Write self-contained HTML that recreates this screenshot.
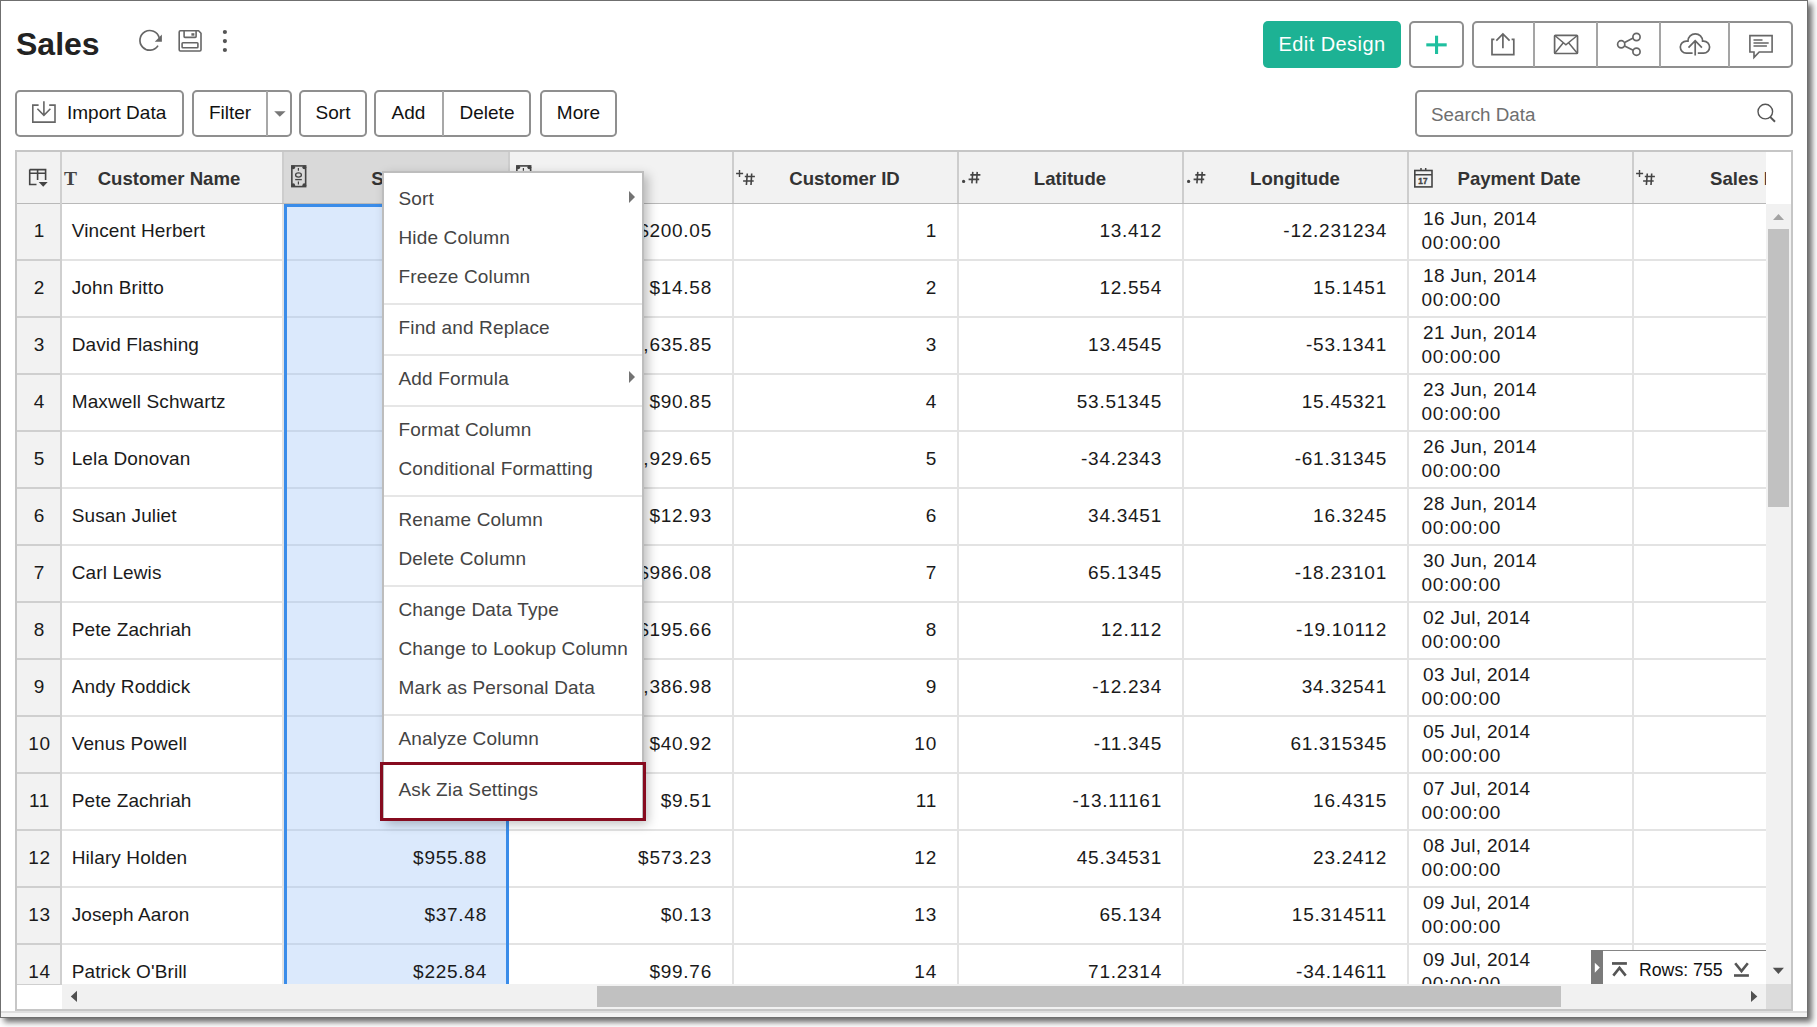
<!DOCTYPE html><html><head><meta charset="utf-8"><title>Sales</title><style>
*{box-sizing:border-box;margin:0;padding:0}
html,body{width:1817px;height:1027px;overflow:hidden;background:#fff;font-family:"Liberation Sans",sans-serif;color:#222}
.a{position:absolute;white-space:nowrap}
#frame{position:absolute;left:0;top:0;width:1808px;height:1018px;box-shadow:4px 4px 6px rgba(0,0,0,.6);background:#fff;overflow:hidden}
#fb{position:absolute;left:0;top:0;width:1808px;height:1018px;border:1px solid #6f6f6f}
.btn{position:absolute;border:2px solid #8f8f8f;border-radius:5px;background:#fff}
.bt{position:absolute;font-size:19px;line-height:19px;color:#111;white-space:nowrap}
.hd{position:absolute;font-size:18.6px;line-height:18.6px;font-weight:bold;color:#333;white-space:nowrap}
.cell{position:absolute;font-size:19px;line-height:19px;color:#1a1a1a;white-space:nowrap;letter-spacing:0.75px}
.nm{letter-spacing:0.12px}
.r{text-align:right}
.mi{position:absolute;left:398.5px;font-size:19px;line-height:19px;color:#444;white-space:nowrap;letter-spacing:0.15px}
.sep{position:absolute;left:384px;width:258px;height:2px;background:#e6e6e6}
</style></head><body>
<div id="frame">
<div class="a" style="left:16px;top:27.9px;font-size:32px;line-height:32px;font-weight:bold;color:#222">Sales</div>
<svg class="a" style="left:0;top:0" width="260" height="70" viewBox="0 0 260 70">
<path d="M158 45.6 A9.8 9.8 0 1 1 159.2 37.8" fill="none" stroke="#666" stroke-width="1.7"/>
<path d="M161.9 34.4 V41.8 H154.8 Z" fill="#666"/>
<path d="M180.6 30.7 H198.6 L201 33.2 V49.8 Q201 51 199.8 51 H180.4 Q179.2 51 179.2 49.8 V31.9 Q179.2 30.7 180.4 30.7 Z" fill="none" stroke="#666" stroke-width="1.6" stroke-linejoin="round"/>
<path d="M184.1 30.8 V36.6 Q184.1 37.4 184.9 37.4 H195.3 Q196.1 37.4 196.1 36.6 V30.8" fill="none" stroke="#666" stroke-width="1.6"/>
<rect x="191.4" y="33.2" width="3" height="2.5" fill="#666"/>
<rect x="182.1" y="42.8" width="15.8" height="5" rx="0.8" fill="none" stroke="#666" stroke-width="1.6"/>
<circle cx="224.9" cy="32" r="2.1" fill="#555"/><circle cx="224.9" cy="41.1" r="2.1" fill="#555"/><circle cx="224.9" cy="50" r="2.1" fill="#555"/>
</svg>
<div class="a" style="left:1263px;top:21px;width:138px;height:47px;background:#1db294;border-radius:5px"></div>
<div class="a" style="left:1263px;top:33.5px;width:138px;text-align:center;font-size:20px;line-height:20px;color:#fff;letter-spacing:0.45px">Edit Design</div>
<div class="btn" style="left:1409px;top:21px;width:55px;height:47px"></div>
<div class="btn" style="left:1472px;top:21px;width:321px;height:47px"></div>
<div class="a" style="left:1533.2px;top:22px;width:1.8px;height:45px;background:#a5a5a5"></div>
<div class="a" style="left:1596.1px;top:22px;width:1.8px;height:45px;background:#a5a5a5"></div>
<div class="a" style="left:1659.0px;top:22px;width:1.8px;height:45px;background:#a5a5a5"></div>
<div class="a" style="left:1728.1px;top:22px;width:1.8px;height:45px;background:#a5a5a5"></div>
<svg class="a" style="left:0;top:0" width="1817" height="70" viewBox="0 0 1817 70">
<rect x="1435" y="35.7" width="3.1" height="18.3" fill="#1fbf9f"/><rect x="1426.3" y="43.3" width="20.4" height="3.1" fill="#1fbf9f"/>
<g fill="none" stroke="#666" stroke-width="1.7">
<path d="M1494.4 39.4 H1492 V54.6 H1513.8 V39.4 H1511.6"/>
<path d="M1502.9 48.2 V34.2 M1496.3 40.6 L1502.9 34 L1509.6 40.6"/>
<rect x="1554.6" y="35.3" width="22.9" height="18.2" rx="0.8"/>
<path d="M1554.8 35.5 L1565.9 44.8 L1577.3 35.5 M1554.8 53.3 L1563.3 42.8 M1577.3 53.3 L1568.6 42.8" stroke-width="1.5"/>
<circle cx="1636.5" cy="37" r="3.6"/><circle cx="1621.2" cy="44.3" r="3.6"/><circle cx="1636.5" cy="51.7" r="3.6"/>
<path d="M1624.6 42.5 L1633.2 38.1 M1624.6 46.1 L1633.2 50.3"/>
<path d="M1692.6 53.1 H1686.3 A6 6 0 0 1 1686.3 41.1 H1688 A7.3 7.3 0 0 1 1702.6 41.1 H1703.6 A6 6 0 0 1 1703.6 53.1 H1697.8"/>
<path d="M1695.2 55.6 V40.8 M1688.5 47.6 L1695.2 40.7 L1701.9 47.6"/>
<path d="M1749.9 35.6 H1772.1 V52 H1759.2 L1754 57.4 V52 H1749.9 Z" stroke-width="1.6" stroke-linejoin="miter"/>
<path d="M1753.5 40 H1762.5 M1753.5 43 H1768.7 M1753.5 46 H1766.9" stroke-width="1.5"/>
</g></svg>
<div class="btn" style="left:15px;top:90px;width:169px;height:47px"></div>
<svg class="a" style="left:25px;top:95px" width="40" height="35" viewBox="0 0 40 35"><path d="M13.6 10.1 H7.8 V27.1 H30 V10.1 H24.2" fill="none" stroke="#666" stroke-width="1.6"/><path d="M18.9 6.3 V20 M12.4 13.8 L18.9 20.3 L25.4 13.8" fill="none" stroke="#666" stroke-width="1.6"/></svg>
<div class="bt" style="left:67px;top:102.6px">Import Data</div>
<div class="btn" style="left:192px;top:90px;width:100px;height:47px"></div>
<div class="a" style="left:266px;top:91px;width:1.7px;height:45px;background:#a8a8a8"></div>
<div class="bt" style="left:192px;width:76px;text-align:center;top:102.6px">Filter</div>
<svg class="a" style="left:270px;top:108px" width="20" height="12" viewBox="0 0 20 12"><path d="M4.2 3.3 H15.6 L9.8 8.8 Z" fill="#777"/></svg>
<div class="btn" style="left:299px;top:90px;width:68px;height:47px"></div>
<div class="bt" style="left:299px;width:68px;text-align:center;top:102.6px">Sort</div>
<div class="btn" style="left:374px;top:90px;width:157px;height:47px"></div>
<div class="a" style="left:442px;top:91px;width:1.7px;height:45px;background:#a8a8a8"></div>
<div class="bt" style="left:374px;width:69px;text-align:center;top:102.6px">Add</div>
<div class="bt" style="left:443px;width:88px;text-align:center;top:102.6px">Delete</div>
<div class="btn" style="left:540px;top:90px;width:77px;height:47px"></div>
<div class="bt" style="left:540px;width:77px;text-align:center;top:102.6px">More</div>
<div class="btn" style="left:1415px;top:90px;width:378px;height:47px"></div>
<div class="a" style="left:1431px;top:106.0px;font-size:18.8px;line-height:18.8px;color:#6f6f6f">Search Data</div>
<svg class="a" style="left:1755px;top:102px" width="24" height="24" viewBox="0 0 24 24"><circle cx="10.3" cy="9.6" r="7.3" fill="none" stroke="#555" stroke-width="1.4"/><path d="M15.1 14.9 L20 19.7" stroke="#555" stroke-width="2"/></svg>
<div class="a" style="left:15px;top:150px;width:1778px;height:861px;border:2px solid #c6c6c6;background:#fff"></div>
<div class="a" style="left:17px;top:152px;width:1749px;height:51px;background:#f2f2f2"></div>
<div class="a" style="left:284px;top:152px;width:224px;height:51px;background:#d9d9d9"></div>
<div class="a" style="left:17px;top:203px;width:1749px;height:1px;background:#b9b9b9"></div>
<div class="a" style="left:17px;top:204px;width:43px;height:781px;background:#f2f2f2"></div>
<div class="a" style="left:284px;top:204px;width:225px;height:780px;background:#dbe9fc"></div>
<div class="a" style="left:17px;top:259px;width:44px;height:2px;background:#cfcfcf"></div>
<div class="a" style="left:62px;top:259px;width:1704px;height:2px;background:#e3e3e3"></div>
<div class="a" style="left:287px;top:259px;width:219px;height:2px;background:#c9d7ea"></div>
<div class="a" style="left:17px;top:316px;width:44px;height:2px;background:#cfcfcf"></div>
<div class="a" style="left:62px;top:316px;width:1704px;height:2px;background:#e3e3e3"></div>
<div class="a" style="left:287px;top:316px;width:219px;height:2px;background:#c9d7ea"></div>
<div class="a" style="left:17px;top:373px;width:44px;height:2px;background:#cfcfcf"></div>
<div class="a" style="left:62px;top:373px;width:1704px;height:2px;background:#e3e3e3"></div>
<div class="a" style="left:287px;top:373px;width:219px;height:2px;background:#c9d7ea"></div>
<div class="a" style="left:17px;top:430px;width:44px;height:2px;background:#cfcfcf"></div>
<div class="a" style="left:62px;top:430px;width:1704px;height:2px;background:#e3e3e3"></div>
<div class="a" style="left:287px;top:430px;width:219px;height:2px;background:#c9d7ea"></div>
<div class="a" style="left:17px;top:487px;width:44px;height:2px;background:#cfcfcf"></div>
<div class="a" style="left:62px;top:487px;width:1704px;height:2px;background:#e3e3e3"></div>
<div class="a" style="left:287px;top:487px;width:219px;height:2px;background:#c9d7ea"></div>
<div class="a" style="left:17px;top:544px;width:44px;height:2px;background:#cfcfcf"></div>
<div class="a" style="left:62px;top:544px;width:1704px;height:2px;background:#e3e3e3"></div>
<div class="a" style="left:287px;top:544px;width:219px;height:2px;background:#c9d7ea"></div>
<div class="a" style="left:17px;top:601px;width:44px;height:2px;background:#cfcfcf"></div>
<div class="a" style="left:62px;top:601px;width:1704px;height:2px;background:#e3e3e3"></div>
<div class="a" style="left:287px;top:601px;width:219px;height:2px;background:#c9d7ea"></div>
<div class="a" style="left:17px;top:658px;width:44px;height:2px;background:#cfcfcf"></div>
<div class="a" style="left:62px;top:658px;width:1704px;height:2px;background:#e3e3e3"></div>
<div class="a" style="left:287px;top:658px;width:219px;height:2px;background:#c9d7ea"></div>
<div class="a" style="left:17px;top:715px;width:44px;height:2px;background:#cfcfcf"></div>
<div class="a" style="left:62px;top:715px;width:1704px;height:2px;background:#e3e3e3"></div>
<div class="a" style="left:287px;top:715px;width:219px;height:2px;background:#c9d7ea"></div>
<div class="a" style="left:17px;top:772px;width:44px;height:2px;background:#cfcfcf"></div>
<div class="a" style="left:62px;top:772px;width:1704px;height:2px;background:#e3e3e3"></div>
<div class="a" style="left:287px;top:772px;width:219px;height:2px;background:#c9d7ea"></div>
<div class="a" style="left:17px;top:829px;width:44px;height:2px;background:#cfcfcf"></div>
<div class="a" style="left:62px;top:829px;width:1704px;height:2px;background:#e3e3e3"></div>
<div class="a" style="left:287px;top:829px;width:219px;height:2px;background:#c9d7ea"></div>
<div class="a" style="left:17px;top:886px;width:44px;height:2px;background:#cfcfcf"></div>
<div class="a" style="left:62px;top:886px;width:1704px;height:2px;background:#e3e3e3"></div>
<div class="a" style="left:287px;top:886px;width:219px;height:2px;background:#c9d7ea"></div>
<div class="a" style="left:17px;top:943px;width:44px;height:2px;background:#cfcfcf"></div>
<div class="a" style="left:62px;top:943px;width:1704px;height:2px;background:#e3e3e3"></div>
<div class="a" style="left:287px;top:943px;width:219px;height:2px;background:#c9d7ea"></div>
<div class="a" style="left:17px;top:984px;width:44px;height:2px;background:#cfcfcf"></div>
<div class="a" style="left:60px;top:152px;width:2px;height:833px;background:#cfcfcf"></div>
<div class="a" style="left:282px;top:152px;width:2px;height:51px;background:#cdcdcd"></div>
<div class="a" style="left:282px;top:204px;width:2px;height:780px;background:#e3e3e3"></div>
<div class="a" style="left:508px;top:152px;width:2px;height:51px;background:#cdcdcd"></div>
<div class="a" style="left:732px;top:152px;width:2px;height:51px;background:#cdcdcd"></div>
<div class="a" style="left:732px;top:204px;width:2px;height:780px;background:#e3e3e3"></div>
<div class="a" style="left:957px;top:152px;width:2px;height:51px;background:#cdcdcd"></div>
<div class="a" style="left:957px;top:204px;width:2px;height:780px;background:#e3e3e3"></div>
<div class="a" style="left:1182px;top:152px;width:2px;height:51px;background:#cdcdcd"></div>
<div class="a" style="left:1182px;top:204px;width:2px;height:780px;background:#e3e3e3"></div>
<div class="a" style="left:1407px;top:152px;width:2px;height:51px;background:#cdcdcd"></div>
<div class="a" style="left:1407px;top:204px;width:2px;height:780px;background:#e3e3e3"></div>
<div class="a" style="left:1632px;top:152px;width:2px;height:51px;background:#cdcdcd"></div>
<div class="a" style="left:1632px;top:204px;width:2px;height:780px;background:#e3e3e3"></div>
<div class="a" style="left:284px;top:204px;width:225px;height:781px;border:3px solid #3a8ce9;border-bottom:none"></div>
<div class="hd" style="left:-31.0px;width:400px;text-align:center;top:169.9px">Customer Name</div>
<div class="hd" style="left:195.5px;width:400px;text-align:center;top:169.9px">Sales</div>
<div class="hd" style="left:644.5px;width:400px;text-align:center;top:169.9px">Customer ID</div>
<div class="hd" style="left:870.0px;width:400px;text-align:center;top:169.9px">Latitude</div>
<div class="hd" style="left:1095.0px;width:400px;text-align:center;top:169.9px">Longitude</div>
<div class="hd" style="left:1319.0px;width:400px;text-align:center;top:169.9px">Payment Date</div>
<div class="hd" style="left:1710px;top:169.9px">Sales ID</div>
<div class="a" style="left:64px;top:168.7px;font-family:'Liberation Serif',serif;font-weight:bold;font-size:19.5px;line-height:19.5px;color:#444">T</div>
<svg class="a" style="left:291px;top:165px" width="16" height="23" viewBox="0 0 16 23"><rect x="0.85" y="0.9" width="13.8" height="20.7" fill="none" stroke="#444" stroke-width="1.6"/><circle cx="2.2" cy="2.3" r="1.9" fill="#444"/><circle cx="13.3" cy="2.3" r="1.9" fill="#444"/><circle cx="2.2" cy="20.2" r="1.9" fill="#444"/><circle cx="13.3" cy="20.2" r="1.9" fill="#444"/><ellipse cx="7.5" cy="10" rx="2.9" ry="2.1" fill="none" stroke="#444" stroke-width="1.3"/><path d="M7.4 3 V5.8 M7.4 16.5 V19.5" stroke="#444" stroke-width="1.2"/><path d="M4.2 14.6 H10.8" stroke="#444" stroke-width="1.3"/></svg>
<svg class="a" style="left:516px;top:165px" width="16" height="23" viewBox="0 0 16 23"><rect x="0.85" y="0.9" width="13.8" height="20.7" fill="none" stroke="#444" stroke-width="1.6"/><circle cx="2.2" cy="2.3" r="1.9" fill="#444"/><circle cx="13.3" cy="2.3" r="1.9" fill="#444"/><circle cx="2.2" cy="20.2" r="1.9" fill="#444"/><circle cx="13.3" cy="20.2" r="1.9" fill="#444"/><ellipse cx="7.5" cy="10" rx="2.9" ry="2.1" fill="none" stroke="#444" stroke-width="1.3"/><path d="M7.4 3 V5.8 M7.4 16.5 V19.5" stroke="#444" stroke-width="1.2"/><path d="M4.2 14.6 H10.8" stroke="#444" stroke-width="1.3"/></svg>
<svg class="a" style="left:0;top:0" width="1817" height="200" viewBox="0 0 1817 200"><g fill="none" stroke="#444" stroke-width="1.6"><path d="M29.7 169.4 V184.5 H36.5 M29.7 169.6 H45.6 V180 M37.6 169.4 V180 M29.7 173.2 H45.6"/><path d="M739.5 170 V177 M736.1 173.55 H743.1" stroke-width="1.4"/><path d="M747.3 173.5 L746.4 185.0 M751.7 173.5 L751.0 185.0 M744.8 176.5 H754.9 M743.1 181.0 H753.7" stroke-width="1.6"/><path d="M1639.5 170 V177 M1636.1 173.55 H1643.1" stroke-width="1.4"/><path d="M1647.3 173.5 L1646.4 185.0 M1651.7 173.5 L1651.0 185.0 M1644.8 176.5 H1654.9 M1643.1 181.0 H1653.7" stroke-width="1.6"/><path d="M972.8 171.9 L971.9 183.4 M977.2 171.9 L976.5 183.4 M970.3 174.9 H980.4 M968.6 179.4 H979.2" stroke-width="1.6"/><path d="M1197.8 171.9 L1196.9 183.4 M1202.2 171.9 L1201.5 183.4 M1195.3 174.9 H1205.4 M1193.6 179.4 H1204.2" stroke-width="1.6"/><rect x="1414.8" y="170.5" width="17.2" height="16.4" stroke-width="1.6"/><path d="M1415 174.7 H1432 M1421 168 V171 M1425.7 168 V171" stroke-width="1.5"/></g><g fill="#444"><path d="M38.7 182.1 H47.7 L43.2 186.8 Z"/><circle cx="963.6" cy="181.4" r="1.6"/><circle cx="1188.6" cy="181.4" r="1.6"/><text x="1423" y="183.9" font-size="8.2" font-weight="bold" text-anchor="middle" font-family="Liberation Sans" letter-spacing="0.3" stroke="#444" stroke-width="0.4">17</text></g></svg>
<div class="cell" style="left:18px;width:43px;text-align:center;top:220.7px">1</div>
<div class="cell nm" style="left:71.7px;top:220.7px">Vincent Herbert</div>
<div class="cell r" style="left:287px;width:200px;top:220.7px">$120.55</div>
<div class="cell r" style="left:512px;width:200px;top:220.7px">$200.05</div>
<div class="cell r" style="left:737px;width:200px;top:220.7px">1</div>
<div class="cell r" style="left:962px;width:200px;top:220.7px">13.412</div>
<div class="cell r" style="left:1187px;width:200px;top:220.7px">-12.231234</div>
<div class="cell" style="left:1423px;top:209.2px;letter-spacing:0.33px">16 Jun, 2014</div>
<div class="cell" style="left:1421.5px;top:232.6px;letter-spacing:0.7px">00:00:00</div>
<div class="cell" style="left:18px;width:43px;text-align:center;top:277.7px">2</div>
<div class="cell nm" style="left:71.7px;top:277.7px">John Britto</div>
<div class="cell r" style="left:287px;width:200px;top:277.7px">$54.21</div>
<div class="cell r" style="left:512px;width:200px;top:277.7px">$14.58</div>
<div class="cell r" style="left:737px;width:200px;top:277.7px">2</div>
<div class="cell r" style="left:962px;width:200px;top:277.7px">12.554</div>
<div class="cell r" style="left:1187px;width:200px;top:277.7px">15.1451</div>
<div class="cell" style="left:1423px;top:266.2px;letter-spacing:0.33px">18 Jun, 2014</div>
<div class="cell" style="left:1421.5px;top:289.6px;letter-spacing:0.7px">00:00:00</div>
<div class="cell" style="left:18px;width:43px;text-align:center;top:334.7px">3</div>
<div class="cell nm" style="left:71.7px;top:334.7px">David Flashing</div>
<div class="cell r" style="left:287px;width:200px;top:334.7px">$1,220.00</div>
<div class="cell r" style="left:512px;width:200px;top:334.7px">$1,635.85</div>
<div class="cell r" style="left:737px;width:200px;top:334.7px">3</div>
<div class="cell r" style="left:962px;width:200px;top:334.7px">13.4545</div>
<div class="cell r" style="left:1187px;width:200px;top:334.7px">-53.1341</div>
<div class="cell" style="left:1423px;top:323.2px;letter-spacing:0.33px">21 Jun, 2014</div>
<div class="cell" style="left:1421.5px;top:346.6px;letter-spacing:0.7px">00:00:00</div>
<div class="cell" style="left:18px;width:43px;text-align:center;top:391.7px">4</div>
<div class="cell nm" style="left:71.7px;top:391.7px">Maxwell Schwartz</div>
<div class="cell r" style="left:287px;width:200px;top:391.7px">$64.12</div>
<div class="cell r" style="left:512px;width:200px;top:391.7px">$90.85</div>
<div class="cell r" style="left:737px;width:200px;top:391.7px">4</div>
<div class="cell r" style="left:962px;width:200px;top:391.7px">53.51345</div>
<div class="cell r" style="left:1187px;width:200px;top:391.7px">15.45321</div>
<div class="cell" style="left:1423px;top:380.2px;letter-spacing:0.33px">23 Jun, 2014</div>
<div class="cell" style="left:1421.5px;top:403.6px;letter-spacing:0.7px">00:00:00</div>
<div class="cell" style="left:18px;width:43px;text-align:center;top:448.7px">5</div>
<div class="cell nm" style="left:71.7px;top:448.7px">Lela Donovan</div>
<div class="cell r" style="left:287px;width:200px;top:448.7px">$1,100.15</div>
<div class="cell r" style="left:512px;width:200px;top:448.7px">$1,929.65</div>
<div class="cell r" style="left:737px;width:200px;top:448.7px">5</div>
<div class="cell r" style="left:962px;width:200px;top:448.7px">-34.2343</div>
<div class="cell r" style="left:1187px;width:200px;top:448.7px">-61.31345</div>
<div class="cell" style="left:1423px;top:437.2px;letter-spacing:0.33px">26 Jun, 2014</div>
<div class="cell" style="left:1421.5px;top:460.6px;letter-spacing:0.7px">00:00:00</div>
<div class="cell" style="left:18px;width:43px;text-align:center;top:505.7px">6</div>
<div class="cell nm" style="left:71.7px;top:505.7px">Susan Juliet</div>
<div class="cell r" style="left:287px;width:200px;top:505.7px">$10.45</div>
<div class="cell r" style="left:512px;width:200px;top:505.7px">$12.93</div>
<div class="cell r" style="left:737px;width:200px;top:505.7px">6</div>
<div class="cell r" style="left:962px;width:200px;top:505.7px">34.3451</div>
<div class="cell r" style="left:1187px;width:200px;top:505.7px">16.3245</div>
<div class="cell" style="left:1423px;top:494.2px;letter-spacing:0.33px">28 Jun, 2014</div>
<div class="cell" style="left:1421.5px;top:517.6px;letter-spacing:0.7px">00:00:00</div>
<div class="cell" style="left:18px;width:43px;text-align:center;top:562.7px">7</div>
<div class="cell nm" style="left:71.7px;top:562.7px">Carl Lewis</div>
<div class="cell r" style="left:287px;width:200px;top:562.7px">$750.30</div>
<div class="cell r" style="left:512px;width:200px;top:562.7px">$986.08</div>
<div class="cell r" style="left:737px;width:200px;top:562.7px">7</div>
<div class="cell r" style="left:962px;width:200px;top:562.7px">65.1345</div>
<div class="cell r" style="left:1187px;width:200px;top:562.7px">-18.23101</div>
<div class="cell" style="left:1423px;top:551.2px;letter-spacing:0.33px">30 Jun, 2014</div>
<div class="cell" style="left:1421.5px;top:574.6px;letter-spacing:0.7px">00:00:00</div>
<div class="cell" style="left:18px;width:43px;text-align:center;top:619.7px">8</div>
<div class="cell nm" style="left:71.7px;top:619.7px">Pete Zachriah</div>
<div class="cell r" style="left:287px;width:200px;top:619.7px">$150.21</div>
<div class="cell r" style="left:512px;width:200px;top:619.7px">$195.66</div>
<div class="cell r" style="left:737px;width:200px;top:619.7px">8</div>
<div class="cell r" style="left:962px;width:200px;top:619.7px">12.112</div>
<div class="cell r" style="left:1187px;width:200px;top:619.7px">-19.10112</div>
<div class="cell" style="left:1423px;top:608.2px;letter-spacing:0.33px">02 Jul, 2014</div>
<div class="cell" style="left:1421.5px;top:631.6px;letter-spacing:0.7px">00:00:00</div>
<div class="cell" style="left:18px;width:43px;text-align:center;top:676.7px">9</div>
<div class="cell nm" style="left:71.7px;top:676.7px">Andy Roddick</div>
<div class="cell r" style="left:287px;width:200px;top:676.7px">$1,200.00</div>
<div class="cell r" style="left:512px;width:200px;top:676.7px">$1,386.98</div>
<div class="cell r" style="left:737px;width:200px;top:676.7px">9</div>
<div class="cell r" style="left:962px;width:200px;top:676.7px">-12.234</div>
<div class="cell r" style="left:1187px;width:200px;top:676.7px">34.32541</div>
<div class="cell" style="left:1423px;top:665.2px;letter-spacing:0.33px">03 Jul, 2014</div>
<div class="cell" style="left:1421.5px;top:688.6px;letter-spacing:0.7px">00:00:00</div>
<div class="cell" style="left:18px;width:43px;text-align:center;top:733.7px">10</div>
<div class="cell nm" style="left:71.7px;top:733.7px">Venus Powell</div>
<div class="cell r" style="left:287px;width:200px;top:733.7px">$30.15</div>
<div class="cell r" style="left:512px;width:200px;top:733.7px">$40.92</div>
<div class="cell r" style="left:737px;width:200px;top:733.7px">10</div>
<div class="cell r" style="left:962px;width:200px;top:733.7px">-11.345</div>
<div class="cell r" style="left:1187px;width:200px;top:733.7px">61.315345</div>
<div class="cell" style="left:1423px;top:722.2px;letter-spacing:0.33px">05 Jul, 2014</div>
<div class="cell" style="left:1421.5px;top:745.6px;letter-spacing:0.7px">00:00:00</div>
<div class="cell" style="left:18px;width:43px;text-align:center;top:790.7px">11</div>
<div class="cell nm" style="left:71.7px;top:790.7px">Pete Zachriah</div>
<div class="cell r" style="left:287px;width:200px;top:790.7px">$7.20</div>
<div class="cell r" style="left:512px;width:200px;top:790.7px">$9.51</div>
<div class="cell r" style="left:737px;width:200px;top:790.7px">11</div>
<div class="cell r" style="left:962px;width:200px;top:790.7px">-13.11161</div>
<div class="cell r" style="left:1187px;width:200px;top:790.7px">16.4315</div>
<div class="cell" style="left:1423px;top:779.2px;letter-spacing:0.33px">07 Jul, 2014</div>
<div class="cell" style="left:1421.5px;top:802.6px;letter-spacing:0.7px">00:00:00</div>
<div class="cell" style="left:18px;width:43px;text-align:center;top:847.7px">12</div>
<div class="cell nm" style="left:71.7px;top:847.7px">Hilary Holden</div>
<div class="cell r" style="left:287px;width:200px;top:847.7px">$955.88</div>
<div class="cell r" style="left:512px;width:200px;top:847.7px">$573.23</div>
<div class="cell r" style="left:737px;width:200px;top:847.7px">12</div>
<div class="cell r" style="left:962px;width:200px;top:847.7px">45.34531</div>
<div class="cell r" style="left:1187px;width:200px;top:847.7px">23.2412</div>
<div class="cell" style="left:1423px;top:836.2px;letter-spacing:0.33px">08 Jul, 2014</div>
<div class="cell" style="left:1421.5px;top:859.6px;letter-spacing:0.7px">00:00:00</div>
<div class="cell" style="left:18px;width:43px;text-align:center;top:904.7px">13</div>
<div class="cell nm" style="left:71.7px;top:904.7px">Joseph Aaron</div>
<div class="cell r" style="left:287px;width:200px;top:904.7px">$37.48</div>
<div class="cell r" style="left:512px;width:200px;top:904.7px">$0.13</div>
<div class="cell r" style="left:737px;width:200px;top:904.7px">13</div>
<div class="cell r" style="left:962px;width:200px;top:904.7px">65.134</div>
<div class="cell r" style="left:1187px;width:200px;top:904.7px">15.314511</div>
<div class="cell" style="left:1423px;top:893.2px;letter-spacing:0.33px">09 Jul, 2014</div>
<div class="cell" style="left:1421.5px;top:916.6px;letter-spacing:0.7px">00:00:00</div>
<div class="cell" style="left:18px;width:43px;text-align:center;top:961.7px">14</div>
<div class="cell nm" style="left:71.7px;top:961.7px">Patrick O'Brill</div>
<div class="cell r" style="left:287px;width:200px;top:961.7px">$225.84</div>
<div class="cell r" style="left:512px;width:200px;top:961.7px">$99.76</div>
<div class="cell r" style="left:737px;width:200px;top:961.7px">14</div>
<div class="cell r" style="left:962px;width:200px;top:961.7px">71.2314</div>
<div class="cell r" style="left:1187px;width:200px;top:961.7px">-34.14611</div>
<div class="cell" style="left:1423px;top:950.2px;letter-spacing:0.33px">09 Jul, 2014</div>
<div class="cell" style="left:1421.5px;top:973.6px;letter-spacing:0.7px">00:00:00</div>
<div class="a" style="left:1766px;top:152px;width:25px;height:52px;background:#fff"></div>
<div class="a" style="left:1766px;top:204px;width:25px;height:780px;background:#f1f1f1"></div>
<svg class="a" style="left:1773px;top:213px" width="12" height="8" viewBox="0 0 12 8"><path d="M0 7 H11 L5.5 1 Z" fill="#a3a3a3"/></svg>
<div class="a" style="left:1768px;top:229px;width:21px;height:278px;background:#c1c1c1"></div>
<div class="a" style="left:17px;top:985px;width:45px;height:24px;background:#fff"></div>
<div class="a" style="left:62px;top:984px;width:1704px;height:25px;background:#f1f1f1"></div>
<div class="a" style="left:597px;top:986px;width:964px;height:21px;background:#c1c1c1"></div>
<svg class="a" style="left:70px;top:990px" width="8" height="13" viewBox="0 0 8 13"><path d="M7 0.8 V12 L0.8 6.4 Z" fill="#505050"/></svg>
<svg class="a" style="left:1750px;top:990px" width="8" height="13" viewBox="0 0 8 13"><path d="M1 0.8 V12 L7.3 6.4 Z" fill="#505050"/></svg>
<div class="a" style="left:1766px;top:984px;width:25px;height:25px;background:#dcdcdc"></div>
<div class="a" style="left:1591px;top:950px;width:175px;height:34px;background:#fff;border-top:1.8px solid #858585"></div>
<div class="a" style="left:1591px;top:950px;width:11.8px;height:33.7px;background:#7a7a7a"></div>
<svg class="a" style="left:0;top:0" width="1817" height="1027" viewBox="0 0 1817 1027">
<path d="M1594.8 962.8 V972.8 L1599.8 967.6 Z" fill="#fff"/>
<rect x="1612" y="962.1" width="14.9" height="2.7" fill="#555"/>
<path d="M1613.3 975.6 L1619.5 967.9 L1625.7 975.6" fill="none" stroke="#555" stroke-width="2.6"/>
<path d="M1735.2 963.3 L1741.5 971.1 L1747.8 963.3" fill="none" stroke="#555" stroke-width="2.6"/>
<rect x="1734" y="974.2" width="14.9" height="2.6" fill="#555"/>
<path d="M1772.8 967.8 H1783.9 L1778.4 974 Z" fill="#505050"/>
</svg>
<div class="a" style="left:1639px;top:961.7px;font-size:17.7px;line-height:17.7px;color:#111">Rows: 755</div>
<div class="a" style="left:0px;top:1011px;width:1809px;height:2px;background:#dedede"></div>
<div class="a" style="left:0px;top:1013px;width:1809px;height:5px;background:#f3f3f3"></div>
<div class="a" style="left:382px;top:171px;width:262px;height:649px;background:#fff;border:2px solid #bdbdbd;box-shadow:4px 4px 10px rgba(0,0,0,.25)"></div>
<div class="mi" style="top:188.6px">Sort</div>
<div class="mi" style="top:227.5px">Hide Column</div>
<div class="mi" style="top:266.5px">Freeze Column</div>
<div class="mi" style="top:318.1px">Find and Replace</div>
<div class="mi" style="top:369.1px">Add Formula</div>
<div class="mi" style="top:420.0px">Format Column</div>
<div class="mi" style="top:459.0px">Conditional Formatting</div>
<div class="mi" style="top:510.0px">Rename Column</div>
<div class="mi" style="top:549.0px">Delete Column</div>
<div class="mi" style="top:600.0px">Change Data Type</div>
<div class="mi" style="top:639.0px">Change to Lookup Column</div>
<div class="mi" style="top:678.0px">Mark as Personal Data</div>
<div class="mi" style="top:728.9px">Analyze Column</div>
<div class="mi" style="top:779.9px">Ask Zia Settings</div>
<div class="sep" style="top:303.0px"></div>
<div class="sep" style="top:354.0px"></div>
<div class="sep" style="top:405.0px"></div>
<div class="sep" style="top:495.0px"></div>
<div class="sep" style="top:585.0px"></div>
<div class="sep" style="top:714.0px"></div>
<svg class="a" style="left:629px;top:191px" width="7" height="13" viewBox="0 0 7 13"><path d="M0 0 V12 L6 6 Z" fill="#737373"/></svg>
<svg class="a" style="left:629px;top:371px" width="7" height="13" viewBox="0 0 7 13"><path d="M0 0 V12 L6 6 Z" fill="#737373"/></svg>
<div class="a" style="left:380px;top:762px;width:266px;height:59px;border:3.5px solid #860b1f"></div>
<div id="fb"></div>
</div>
</body></html>
